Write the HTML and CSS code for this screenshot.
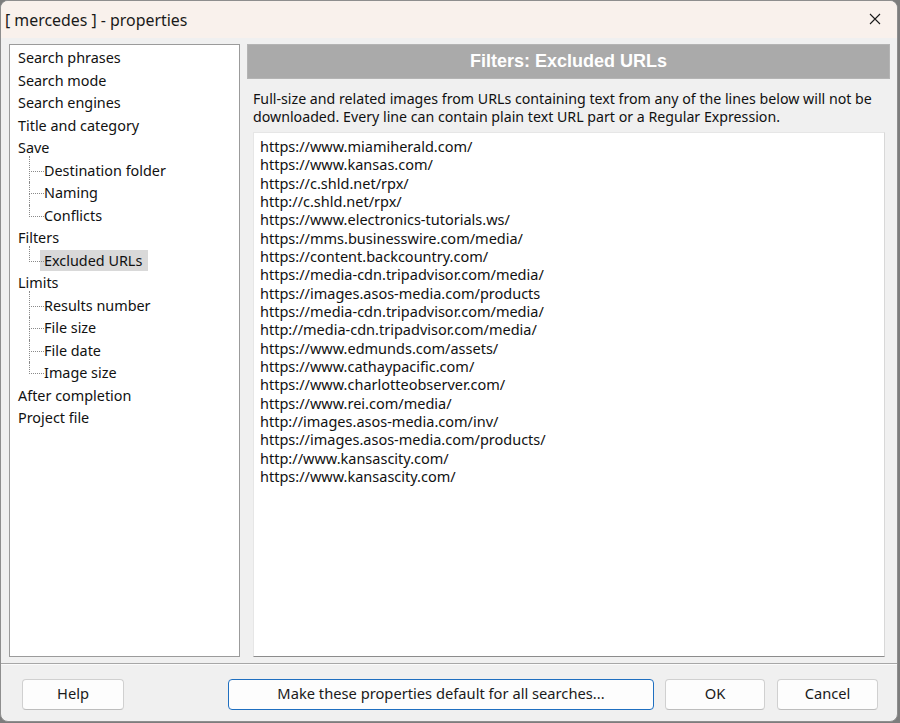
FILE: index.html
```html
<!DOCTYPE html>
<html lang="en">
<head>
  <meta charset="UTF-8">
  <title>[ mercedes ] - properties</title>
  <link rel="stylesheet" href="styles.css">
</head>
<body>

  <div class="window">
    <div class="titlebar">
      <span class="title">[ mercedes ] - properties</span>
      <span class="close">
        <svg width="12" height="12" viewBox="0 0 12 12"><path d="M1 1 L11 11 M11 1 L1 11" stroke="#1b1b1b" stroke-width="1.1" fill="none"/></svg>
      </span>
    </div>

    <div class="content">
      <ul class="tree">
        <li>Search phrases</li>
        <li>Search mode</li>
        <li>Search engines</li>
        <li>Title and category</li>
        <li>Save
          <ul>
            <li>Destination folder</li>
            <li>Naming</li>
            <li>Conflicts</li>
          </ul>
        </li>
        <li>Filters
          <ul>
            <li><span class="selected">Excluded URLs</span></li>
          </ul>
        </li>
        <li>Limits
          <ul>
            <li>Results number</li>
            <li>File size</li>
            <li>File date</li>
            <li>Image size</li>
          </ul>
        </li>
        <li>After completion</li>
        <li>Project file</li>
      </ul>

      <div class="panel">
        <div class="panel-header">Filters: Excluded URLs</div>
        <p class="description">Full-size and related images from URLs containing text from any of the lines below will not be downloaded. Every line can contain plain text URL part or a Regular Expression.</p>
        <div class="url-list">
          <div>https://www.miamiherald.com/</div>
          <div>https://www.kansas.com/</div>
          <div>https://c.shld.net/rpx/</div>
          <div>http://c.shld.net/rpx/</div>
          <div>https://www.electronics-tutorials.ws/</div>
          <div>https://mms.businesswire.com/media/</div>
          <div>https://content.backcountry.com/</div>
          <div>https://media-cdn.tripadvisor.com/media/</div>
          <div>https://images.asos-media.com/products</div>
          <div>https://media-cdn.tripadvisor.com/media/</div>
          <div>http://media-cdn.tripadvisor.com/media/</div>
          <div>https://www.edmunds.com/assets/</div>
          <div>https://www.cathaypacific.com/</div>
          <div>https://www.charlotteobserver.com/</div>
          <div>https://www.rei.com/media/</div>
          <div>http://images.asos-media.com/inv/</div>
          <div>https://images.asos-media.com/products/</div>
          <div>http://www.kansascity.com/</div>
          <div>https://www.kansascity.com/</div>
        </div>
      </div>
    </div>

    <div class="footer">
      <button class="btn btn-help">Help</button>
      <button class="btn btn-default focused">Make these properties default for all searches...</button>
      <button class="btn btn-ok">OK</button>
      <button class="btn btn-cancel">Cancel</button>
    </div>
  </div>

</body>
</html>
```

FILE: styles.css
```css
* {
  margin: 0;
  padding: 0;
  box-sizing: border-box;
}

body {
  background: #7d7d7d;
  width: 900px;
  height: 723px;
  overflow: hidden;
  font-family: 'Noto Sans', 'Open Sans', sans-serif;
  font-size: 14.4px;
  color: #111;
}

.window {
  width: 898px;
  height: 722px;
  border: 1px solid #8e8e8e;
  border-radius: 8px;
  overflow: hidden;
  background: #f0f0f0;
  display: flex;
  flex-direction: column;
}

.titlebar {
  height: 37px;
  flex: none;
  background: #f9f1ec;
  display: flex;
  align-items: center;
  justify-content: space-between;
  padding: 0 16px 0 4px;
}

.title {
  font-size: 15.9px;
  color: #1a1a1a;
}

.close {
  display: flex;
  margin-top: -2px;
}

.content {
  flex: 1;
  display: flex;
  gap: 7px;
  padding: 6px 7px 0 8px;
}

/* left tree */
.tree {
  list-style: none;
  width: 231px;
  height: 613px;
  background: #fff;
  border: 1px solid #9b9b9b;
  padding: 2px 0 0 8px;
  line-height: 22.5px;
  color: #111;
}

.tree ul {
  list-style: none;
  margin-left: 11px;
}

.tree ul li {
  position: relative;
  padding-left: 15px;
}

.tree ul li::before {
  content: '';
  position: absolute;
  left: 0;
  top: 0;
  height: 11px;
  width: 14px;
  border-left: 1px dotted #8a8a8a;
  border-bottom: 1px dotted #8a8a8a;
}

.tree ul li:not(:last-child)::after {
  content: '';
  position: absolute;
  left: 0;
  top: 11px;
  bottom: 0;
  border-left: 1px dotted #8a8a8a;
}

.tree ul li:first-child::before {
  top: -4px;
  height: 15px;
}

.selected {
  background: #d9d9d9;
  margin-left: -4px;
  padding: 0 6px 0 4px;
  display: inline-block;
  line-height: 21px;
}

/* right panel */
.panel {
  flex: 1;
  display: flex;
  flex-direction: column;
}

.panel-header {
  height: 35px;
  background: #aaaaaa;
  border: 1px solid #b4b4b4;
  color: #fff;
  font-family: 'Liberation Sans', Arial, sans-serif;
  font-weight: bold;
  font-size: 18px;
  display: flex;
  align-items: center;
  justify-content: center;
}

.description {
  margin: 11px 0 0 6px;
  line-height: 18px;
  font-size: 14.2px;
}

.url-list {
  margin: 6px 5px 0 6px;
  height: 525px;
  background: #fff;
  border-top: 1px solid #e6e6e6;
  border-left: 1px solid #e6e6e6;
  border-right: 1px solid #d8d8d8;
  border-bottom: 1px solid #8c8c8c;
  padding: 4px 6px;
  line-height: 18.33px;
  font-size: 14.5px;
}

/* footer */
.footer {
  height: 58px;
  flex: none;
  border-top: 1px solid #a7a7a7;
  box-shadow: inset 0 1px 0 #fbfbfb;
  margin-top: 6px;
  display: flex;
  align-items: flex-start;
  padding: 15px 0 0 21px;
}

.btn {
  height: 31px;
  padding-bottom: 3px;
  background: #fdfdfd;
  border: 1px solid #d0d0d0;
  border-bottom-color: #bdbdbd;
  border-radius: 4px;
  font-family: 'Noto Sans', 'Open Sans', sans-serif;
  font-size: 14.7px;
  color: #1a1a1a;
}

.btn-help { width: 102px; }
.btn-default { width: 426px; margin-left: 104px; }
.btn-ok { width: 100px; margin-left: 11px; }
.btn-cancel { width: 101px; margin-left: 12px; }

.focused {
  border: 1px solid #1f6fc0;
}
```
